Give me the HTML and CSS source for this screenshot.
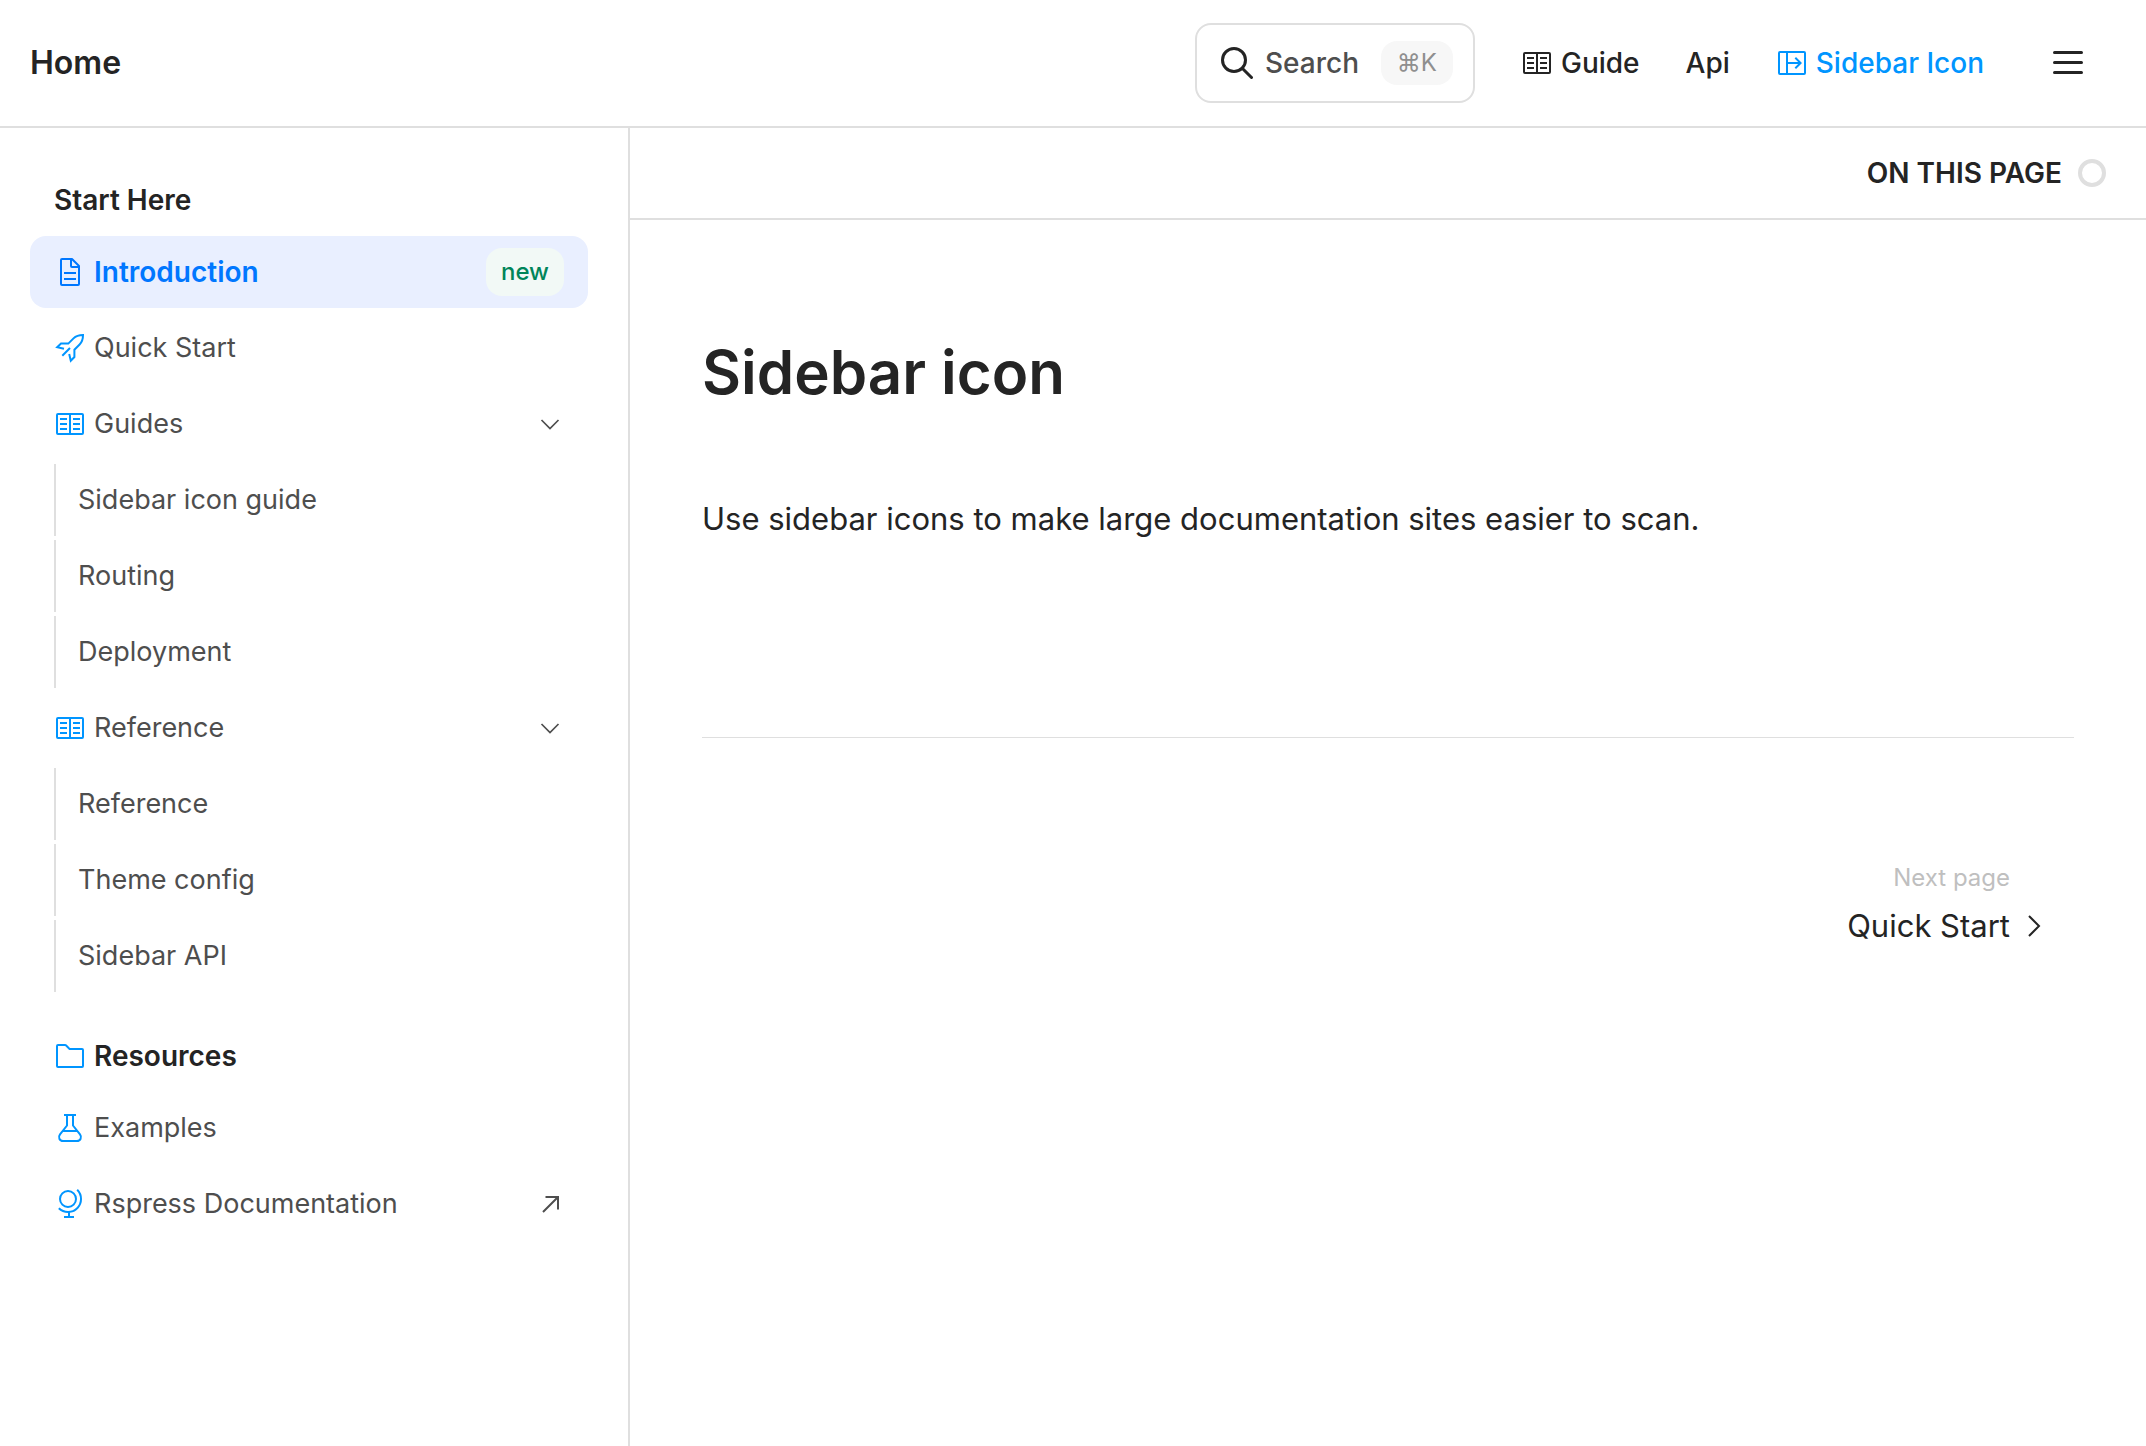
FILE: index.html
```
<!DOCTYPE html>
<html lang="en">

<head>
    <meta charset="UTF-8">
    <meta name="viewport" content="width=device-width, initial-scale=1.0">
    <title>Sidebar icon</title>
    <link rel="stylesheet" href="styles.css">
</head>

<body>
    <!-- shared icons -->
    <svg class="sprite" aria-hidden="true">
        <symbol id="icon-book" viewBox="0 0 32 32">
            <path d="M19 10h7v2h-7zM19 15h7v2h-7zM19 20h7v2h-7zM6 10h7v2H6zM6 15h7v2H6zM6 20h7v2H6z" />
            <path d="M28 5H4a2 2 0 0 0-2 2v18a2 2 0 0 0 2 2h24a2 2 0 0 0 2-2V7a2 2 0 0 0-2-2ZM4 7h11v18H4Zm13 18V7h11v18Z" />
        </symbol>
        <symbol id="icon-down" viewBox="0 0 28 28">
            <path d="M5.500 10l8.500 8.500 8.500-8.500" fill="none" stroke="currentColor" stroke-width="1.700" />
        </symbol>
    </svg>

    <header class="navbar">
        <a class="logo" href="#">Home</a>
        <div class="navbar-right">
            <button class="search" type="button">
                <svg class="search-icon" viewBox="0 0 32 32">
                    <circle cx="13" cy="13" r="11.500" />
                    <path d="M21.500 21.500l9 9" />
                </svg>
                <span>Search</span>
                <kbd class="search-key">⌘K</kbd>
            </button>
            <nav class="nav">
                <a class="nav-link" href="#">
                    <svg class="icon"><use href="#icon-book" /></svg>
                    Guide
                </a>
                <a class="nav-link" href="#">Api</a>
                <a class="nav-link nav-active" href="#">
                    <svg class="icon" viewBox="0 0 32 32">
                        <path d="M28 4H4a2 2 0 0 0-2 2v20a2 2 0 0 0 2 2h24a2 2 0 0 0 2-2V6a2 2 0 0 0-2-2ZM10 26H4V6h6Zm18 0H12v-9h10.170l-3.580 3.590L20 22l6-6-6-6-1.410 1.410L22.170 15H12V6h16Z" />
                    </svg>
                    Sidebar Icon
                </a>
            </nav>
            <button class="menu" type="button" aria-label="Menu">
                <svg viewBox="0 0 36 36">
                    <path d="M4.500 7.500h27M4.500 17.500h27M4.500 27.500h27" />
                </svg>
            </button>
        </div>
    </header>

    <div class="layout">
        <aside class="sidebar">
            <section class="section">
                <h2 class="section-title">Start Here</h2>
                <a class="item item-active" href="#">
                    <svg class="icon" viewBox="0 0 32 32">
                        <path d="M25.700 9.300l-7-7A1 1 0 0 0 18 2H8a2 2 0 0 0-2 2v24a2 2 0 0 0 2 2h16a2 2 0 0 0 2-2V10a1 1 0 0 0-.300-.700ZM18 4.400l5.600 5.600H18ZM24 28H8V4h8v6a2 2 0 0 0 2 2h6Z" />
                        <path d="M10 22h12v2H10zM10 16h12v2H10z" />
                    </svg>
                    Introduction
                    <span class="tag">new</span>
                </a>
                <a class="item" href="#">
                    <svg class="icon icon-line" viewBox="0 0 32 32">
                        <path d="M10 16.800L3.200 15.200 7 11.600h7.300l5.200-5.200C22 3.900 25 3 29 3c0 4-.900 7-3.400 9.500l-5.200 5.200V25l-3.600 3.800L15.200 22M8.300 23.700l7.700-7.700" />
                    </svg>
                    Quick Start
                </a>
                <button class="item" type="button">
                    <svg class="icon"><use href="#icon-book" /></svg>
                    Guides
                    <svg class="item-arrow"><use href="#icon-down" /></svg>
                </button>
                <a class="item item-sub" href="#">Sidebar icon guide</a>
                <a class="item item-sub" href="#">Routing</a>
                <a class="item item-sub" href="#">Deployment</a>
                <button class="item" type="button">
                    <svg class="icon"><use href="#icon-book" /></svg>
                    Reference
                    <svg class="item-arrow"><use href="#icon-down" /></svg>
                </button>
                <a class="item item-sub" href="#">Reference</a>
                <a class="item item-sub" href="#">Theme config</a>
                <a class="item item-sub" href="#">Sidebar API</a>
            </section>

            <section class="section">
                <h2 class="section-title">
                    <svg class="icon" viewBox="0 0 32 32">
                        <path d="M11.170 6l4 4H28v16H4V6h7.170m0-2H4a2 2 0 0 0-2 2v20a2 2 0 0 0 2 2h24a2 2 0 0 0 2-2V10a2 2 0 0 0-2-2H16l-3.410-3.410A2 2 0 0 0 11.170 4Z" />
                    </svg>
                    Resources
                </h2>
                <a class="item" href="#">
                    <svg class="icon icon-line" viewBox="0 0 32 32">
                        <path d="M10 3h12M13 3v10.500L6 22.300C3.700 25.300 5.600 29 9 29h14c3.400 0 5.300-3.700 3-6.700L19 13.500V3M9 19h14" />
                    </svg>
                    Examples
                </a>
                <a class="item" href="#">
                    <svg class="icon" viewBox="0 0 32 32">
                        <path d="M14 4a7 7 0 1 1-7 7 7 7 0 0 1 7-7m0-2a9 9 0 1 0 9 9 9 9 0 0 0-9-9Z" />
                        <path d="M28 11a13.956 13.956 0 0 0-4.105-9.895l-1.414 1.414A11.994 11.994 0 0 1 5.557 19.520l-.038-.039-1.414 1.414A13.956 13.956 0 0 0 14 24.990V28h-4v2h10v-2h-4v-3.160A14.010 14.010 0 0 0 28 11Z" />
                    </svg>
                    Rspress Documentation
                    <svg class="item-arrow" viewBox="0 0 28 28">
                        <path d="M7 22L22 7M9.500 7H22v12.500" fill="none" stroke="currentColor" stroke-width="2" />
                    </svg>
                </a>
            </section>
        </aside>

        <main class="content">
            <div class="outline">
                <button class="outline-button" type="button">
                    ON THIS PAGE
                    <span class="outline-ring"></span>
                </button>
            </div>
            <article class="doc">
                <h1>Sidebar icon</h1>
                <p>Use sidebar icons to make large documentation sites easier to scan.</p>
                <footer class="doc-footer">
                    <a class="next" href="#">
                        <span class="next-label">Next page</span>
                        <span class="next-title">Quick Start</span>
                        <svg class="next-icon" viewBox="0 0 32 32">
                            <path d="M11 6l10 10-10 10" />
                        </svg>
                    </a>
                </footer>
            </article>
        </main>
    </div>
</body>

</html>
```
FILE: styles.css
```
* {
    box-sizing: border-box;
}

body {
    margin: 0;
    min-height: 100vh;
    display: flex;
    flex-direction: column;
    font-family: Inter, "Liberation Sans", sans-serif;
    font-size: 28px;
    line-height: 40px;
    color: #242424;
    background-color: #fff;
}

a {
    color: inherit;
    text-decoration: none;
}

button {
    font: inherit;
    color: inherit;
    background: none;
    border: 0;
    padding: 0;
    cursor: pointer;
}

.sprite {
    display: none;
}

.icon {
    width: 32px;
    height: 32px;
    flex: none;
    fill: currentColor;
}

.icon-line {
    fill: none;
    stroke: currentColor;
    stroke-width: 2;
}

/* top bar */
.navbar {
    display: flex;
    align-items: center;
    justify-content: space-between;
    height: 128px;
    padding: 0 60px 0 30px;
    border-bottom: 2px solid #dfdfdf;
}

.logo {
    font-size: 32px;
    font-weight: 600;
}

.navbar-right,
.nav {
    display: flex;
    align-items: center;
    gap: 46px;
}

.search {
    display: flex;
    align-items: center;
    width: 280px;
    height: 80px;
    padding: 0 20px 0 24px;
    border: 2px solid #dfdfdf;
    border-radius: 16px;
    font-weight: 500;
    color: #4e4e4e;
}

.search-icon {
    width: 32px;
    height: 32px;
    margin-right: 12px;
    fill: none;
    stroke: #242424;
    stroke-width: 3;
    stroke-linecap: round;
}

.search-key {
    margin-left: auto;
    padding: 0 16px;
    height: 44px;
    line-height: 44px;
    border-radius: 16px;
    font-family: inherit;
    font-size: 24px;
    font-weight: 400;
    color: #8f8f8f;
    background-color: #f7f7f7;
}

.nav-link {
    display: flex;
    align-items: center;
    gap: 8px;
    font-weight: 500;
}

.nav-active {
    color: #0095ff;
}

.menu {
    display: flex;
    margin-left: 20px;
}

.menu svg {
    width: 36px;
    height: 36px;
    fill: none;
    stroke: currentColor;
    stroke-width: 3;
    stroke-linecap: round;
}

.layout {
    flex: 1;
    display: flex;
}

/* sidebar */
.sidebar {
    width: 630px;
    flex: none;
    padding: 40px 40px 40px 30px;
    border-right: 2px solid #dfdfdf;
}

.section {
    display: flex;
    flex-direction: column;
    gap: 4px;
    margin-bottom: 32px;
}

.section-title {
    display: flex;
    align-items: center;
    gap: 8px;
    height: 64px;
    margin: 0;
    padding: 0 24px;
    font-size: 28px;
    font-weight: 600;
}

.section-title .icon {
    color: #0095ff;
}

.item {
    display: flex;
    align-items: center;
    gap: 8px;
    height: 72px;
    padding: 0 24px;
    border-radius: 16px;
    font-size: 27px;
    color: #4e4e4e;
}

.item .icon {
    color: #0095ff;
}

.item-active {
    font-size: 28px;
    font-weight: 600;
    color: #0077ff;
    background-color: #e9efff;
}

.item-active .icon {
    color: #0077ff;
}

.item-sub {
    margin-left: 24px;
    padding: 0 22px;
    border-left: 2px solid #dfdfdf;
    border-radius: 0;
}

.item-arrow {
    width: 28px;
    height: 28px;
    margin-left: auto;
}

.tag {
    margin-left: auto;
    padding: 0 15px;
    height: 48px;
    line-height: 48px;
    border-radius: 16px;
    font-size: 24px;
    font-weight: 500;
    color: #00855a;
    background-color: #f2f9f6;
}

/* page */
.content {
    flex: 1;
    min-width: 0;
}

.outline {
    display: flex;
    justify-content: flex-end;
    height: 92px;
    padding: 0 40px;
    border-bottom: 2px solid #dfdfdf;
}

.outline-button {
    display: flex;
    align-items: center;
    gap: 16px;
    font-weight: 600;
}

.outline-ring {
    width: 28px;
    height: 28px;
    border: 4px solid #dfdfdf;
    border-radius: 50%;
}

.doc {
    padding: 112px 72px;
}

h1 {
    margin: 0 0 80px;
    font-size: 60px;
    line-height: 80px;
    font-weight: 600;
}

p {
    margin: 0;
    font-size: 31px;
    line-height: 54px;
}

.doc-footer {
    display: flex;
    justify-content: flex-end;
    margin-top: 191px;
    padding: 120px 24px;
    border-top: 1px solid #dfdfdf;
}

.next {
    display: grid;
    grid-template-columns: auto 32px;
    column-gap: 8px;
    row-gap: 4px;
    align-items: center;
    text-align: right;
}

.next-label {
    grid-column: 1;
    font-size: 24px;
    color: #bfbfbf;
}

.next-title {
    grid-column: 1;
    font-size: 31px;
    line-height: 48px;
}

.next-icon {
    width: 32px;
    height: 32px;
    fill: none;
    stroke: currentColor;
    stroke-width: 2;
}
```
